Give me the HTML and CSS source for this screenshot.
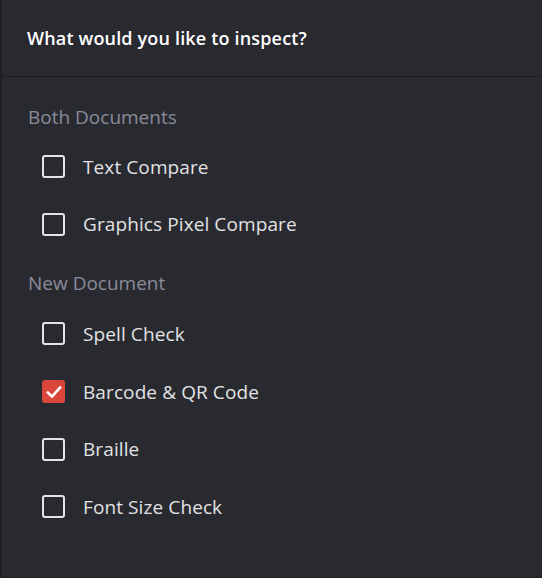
FILE: index.html
```html
<!DOCTYPE html>
<html>
<head>
<meta charset="utf-8">
<link rel="stylesheet" href="styles.css">
</head>
<body>
<div class="panel">
  <div class="header">What would you like to inspect?</div>
  <div class="section first">
    <div class="section-label">Both Documents</div>
    <div class="row"><span class="box"></span><span class="label">Text Compare</span></div>
    <div class="row"><span class="box"></span><span class="label">Graphics Pixel Compare</span></div>
  </div>
  <div class="section">
    <div class="section-label">New Document</div>
    <div class="row"><span class="box"></span><span class="label">Spell Check</span></div>
    <div class="row"><span class="box checked"><svg viewBox="0 0 24 24" width="20" height="20"><path d="M4.5 12.5l5 5L19.5 6.5" fill="none" stroke="#fff" stroke-width="3.2" stroke-linecap="round" stroke-linejoin="round"/></svg></span><span class="label">Barcode &amp; QR Code</span></div>
    <div class="row"><span class="box"></span><span class="label">Braille</span></div>
    <div class="row"><span class="box"></span><span class="label">Font Size Check</span></div>
  </div>
</div>
</body>
</html>
```
FILE: styles.css
```css
html, body {
  margin: 0;
  padding: 0;
  background: #292a30;
}
.panel {
  box-sizing: border-box;
  width: 542px;
  height: 578px;
  background: #292a30;
  border-left: 2px solid #1e1f23;
  border-bottom: 1px solid #1e1f23;
  font-family: "Open Sans", "Noto Sans", sans-serif;
  overflow: hidden;
}
.header {
  height: 77px;
  box-sizing: border-box;
  border-bottom: 1px solid #1c1d21;
  padding-left: 25px;
  display: flex;
  align-items: center;
  color: #ffffff;
  font-size: 18px;
  font-weight: 600;
  letter-spacing: 0.17px;
}
.section {
  margin-top: 18px;
}
.section.first {
  margin-top: 28px;
}
.section-label {
  padding-left: 26px;
  line-height: 24px;
  height: 24px;
  margin-bottom: 10px;
  font-size: 19px;
  color: #8a8b9a;
}
.section.first .section-label {
  margin-bottom: 9px;
}
.row {
  height: 57.6px;
  display: flex;
  align-items: center;
  padding-left: 40px;
}
.box {
  box-sizing: border-box;
  width: 23px;
  height: 23px;
  border: 2px solid #e4e4e6;
  border-radius: 3px;
  flex: none;
  display: flex;
  align-items: center;
  justify-content: center;
}
.box.checked {
  border: none;
  background: #d9463c;
}
.label {
  margin-left: 18px;
  font-size: 19px;
  letter-spacing: 0.1px;
  color: #e2e2e4;
}
```
